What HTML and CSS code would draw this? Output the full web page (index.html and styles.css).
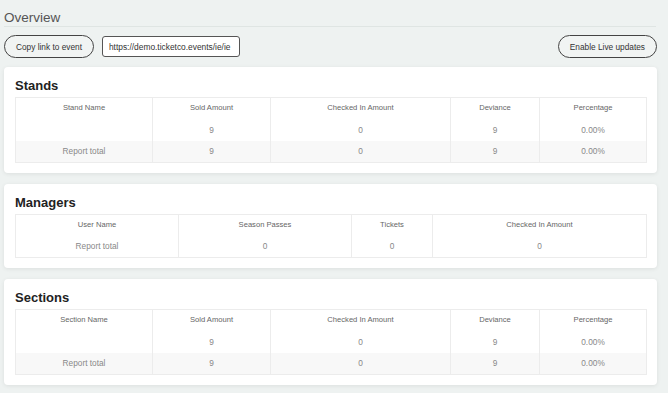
FILE: index.html
```html
<!DOCTYPE html>
<html lang="en">
<head>
    <meta charset="UTF-8">
    <title>Overview</title>
    <link rel="stylesheet" href="styles.css">
</head>
<body>
    <div class="page">
        <h1 class="page-title">Overview</h1>

        <div class="toolbar">
            <button class="pill-btn">Copy link to event</button>
            <input class="link-input" type="text" value="https://demo.ticketco.events/ie/ie" readonly>
            <button class="pill-btn live-btn">Enable Live updates</button>
        </div>

        <div class="card">
            <h2 class="card-title">Stands</h2>
            <table class="report">
                <colgroup>
                    <col class="c-name"><col class="c-sold"><col class="c-checked"><col class="c-dev"><col>
                </colgroup>
                <thead>
                    <tr><th>Stand Name</th><th>Sold Amount</th><th>Checked In Amount</th><th>Deviance</th><th>Percentage</th></tr>
                </thead>
                <tbody>
                    <tr><td></td><td>9</td><td>0</td><td>9</td><td>0.00%</td></tr>
                    <tr class="total"><td>Report total</td><td>9</td><td>0</td><td>9</td><td>0.00%</td></tr>
                </tbody>
            </table>
        </div>

        <div class="card">
            <h2 class="card-title">Managers</h2>
            <table class="report">
                <colgroup>
                    <col class="m-user"><col class="m-season"><col class="m-tickets"><col>
                </colgroup>
                <thead>
                    <tr><th>User Name</th><th>Season Passes</th><th>Tickets</th><th>Checked In Amount</th></tr>
                </thead>
                <tbody>
                    <tr><td>Report total</td><td>0</td><td>0</td><td>0</td></tr>
                </tbody>
            </table>
        </div>

        <div class="card">
            <h2 class="card-title">Sections</h2>
            <table class="report">
                <colgroup>
                    <col class="c-name"><col class="c-sold"><col class="c-checked"><col class="c-dev"><col>
                </colgroup>
                <thead>
                    <tr><th>Section Name</th><th>Sold Amount</th><th>Checked In Amount</th><th>Deviance</th><th>Percentage</th></tr>
                </thead>
                <tbody>
                    <tr><td></td><td>9</td><td>0</td><td>9</td><td>0.00%</td></tr>
                    <tr class="total"><td>Report total</td><td>9</td><td>0</td><td>9</td><td>0.00%</td></tr>
                </tbody>
            </table>
        </div>
    </div>
</body>
</html>
```

FILE: styles.css
```css
*{
    margin: 0;
    padding: 0;
    box-sizing: border-box;
}
body{
    background: #eef2f1;
    font-family: "Liberation Sans", Arial, sans-serif;
    color: #333;
}
.page{
    padding: 10px 11px 20px 4px;
}
.page-title{
    font-size: 13.5px;
    font-weight: normal;
    line-height: 16px;
    color: #555;
    border-bottom: 1px solid #dfe5e3;
    margin-right: 1px;
}
.toolbar{
    display: flex;
    align-items: center;
    gap: 8px;
    margin-top: 8px;
    margin-bottom: 9px;
}
.pill-btn{
    height: 23px;
    padding: 0 11px;
    border: 1.3px solid #444;
    border-radius: 12px;
    background: #f1f4f3;
    font-family: inherit;
    font-size: 8.3px;
    color: #333;
}
.link-input{
    width: 138px;
    height: 21px;
    padding: 0 6px;
    border: 1px solid #555;
    border-radius: 3px;
    background: #fff;
    font-family: inherit;
    font-size: 8.4px;
    color: #333;
}
.live-btn{
    margin-left: auto;
}
.card{
    background: #fff;
    border-radius: 4px;
    box-shadow: 0 1px 4px rgba(0,0,0,.08);
    padding: 11px 10px 10px 11px;
    margin-bottom: 11px;
}
.card-title{
    font-size: 13px;
    font-weight: bold;
    line-height: 16px;
    color: #222;
    margin-bottom: 3px;
}
.report{
    width: 100%;
    table-layout: fixed;
    border-collapse: collapse;
    border: 1px solid #ececec;
    text-align: center;
}
.report th,
.report td{
    border-left: 1px solid #ececec;
    padding: 0 4px;
}
.report th{
    height: 21px;
    font-size: 7.6px;
    font-weight: normal;
    color: #666;
    vertical-align: top;
    padding-top: 5px;
}
.report td{
    height: 22px;
    font-size: 8.3px;
    color: #888;
    vertical-align: middle;
}
.report .total td{
    background: #f8f8f8;
}
.c-name{ width: 137px; }
.c-sold{ width: 118px; }
.c-checked{ width: 180px; }
.c-dev{ width: 89px; }
.m-user{ width: 163px; }
.m-season{ width: 173px; }
.m-tickets{ width: 81px; }
```
